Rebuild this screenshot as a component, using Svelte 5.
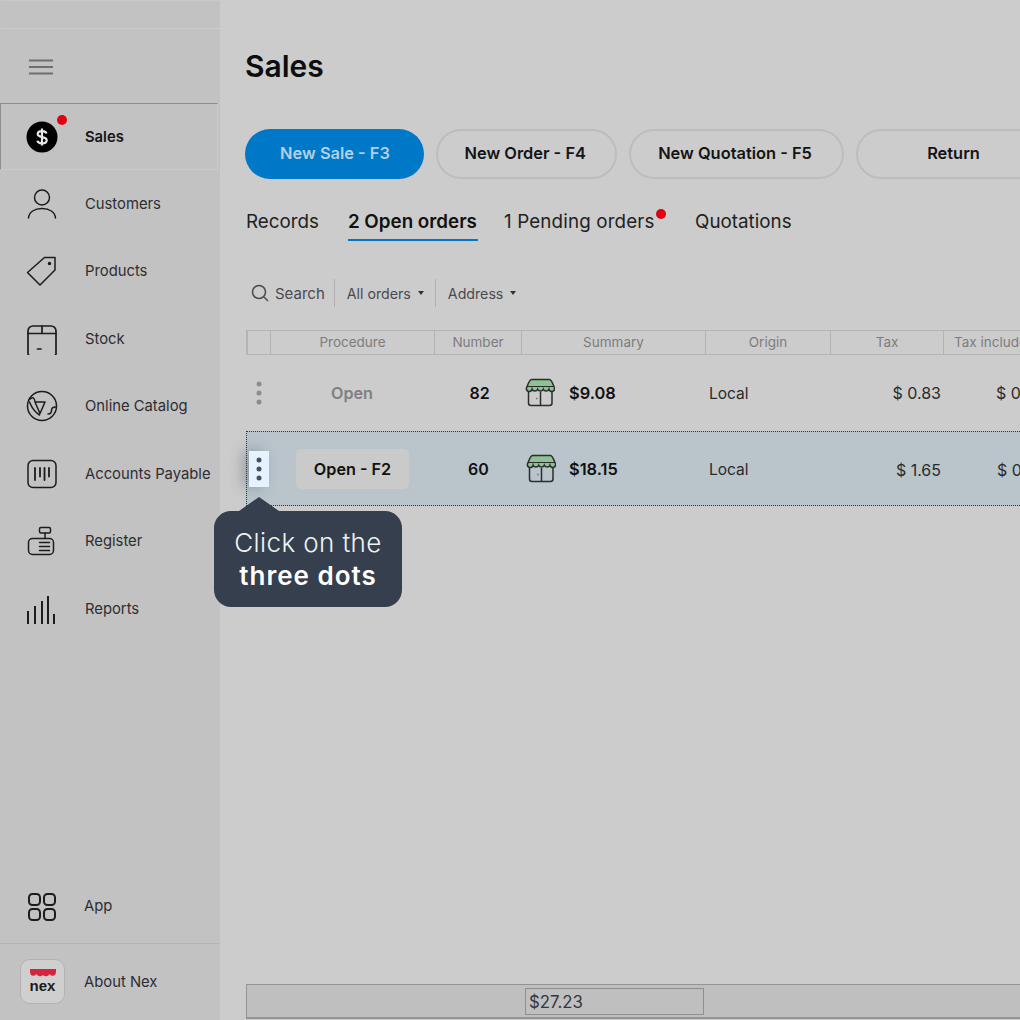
<script>
  const navItems = [
    { label: "Customers", icon: "customers" },
    { label: "Products", icon: "products" },
    { label: "Stock", icon: "stock" },
    { label: "Online Catalog", icon: "catalog" },
    { label: "Accounts Payable", icon: "payable" },
    { label: "Register", icon: "register" },
    { label: "Reports", icon: "reports" },
  ];

  const actions = [
    { label: "New Sale - F3", width: 179, primary: true },
    { label: "New Order - F4", width: 180.5 },
    { label: "New Quotation - F5", width: 215 },
    { label: "Return", width: 198 },
  ];

  const columns = ["", "Procedure", "Number", "Summary", "Origin", "Tax", "Tax included"];

  const orders = [
    { procedure: "Open", number: 82, total: "$9.08", origin: "Local", tax: "$ 0.83", taxIncluded: "$ 0.83" },
    { procedure: "Open - F2", number: 60, total: "$18.15", origin: "Local", tax: "$ 1.65", taxIncluded: "$ 0.83", selected: true },
  ];
</script>

{#snippet dots()}
  <svg width="8" height="24" viewBox="0 0 8 24" fill="currentColor">
    <circle cx="4" cy="3" r="2.5" />
    <circle cx="4" cy="12" r="2.5" />
    <circle cx="4" cy="21" r="2.5" />
  </svg>
{/snippet}

{#snippet shop()}
  <svg width="30" height="30" viewBox="0 0 30 30" fill="none" stroke="#2c2c2c" stroke-width="1.5">
    <rect x="3.5" y="9" width="23.500" height="18.500" rx="2.500" />
    <path d="M15.500 14v13.500" />
    <path d="M11.500 20.500h.8" />
    <path d="M6.500 1.500h18c2 0 3.500 4.500 5 8.500a2.800 2.800 0 0 1-5.600 1.200 3 3 0 0 1-5.600 0 3 3 0 0 1-5.600 0 3 3 0 0 1-5.600 0A2.800 2.800 0 0 1 1.500 10c1.500-4 3-8.500 5-8.500z" fill="#8fc196" />
    <path d="M2 8.500h27" stroke-width="1" />
  </svg>
{/snippet}

{#snippet navIcon(name)}
  <svg width="32" height="32" viewBox="0 0 32 32" fill="none" stroke="#1c1c1c" stroke-width="1.500" stroke-linecap="round" stroke-linejoin="round">
    {#if name === "customers"}
      <circle cx="16" cy="9.500" r="7.500" />
      <path d="M2.500 30c.5-6 6-9.500 13.500-9.500S29 24 29.500 30" />
    {:else if name === "products"}
      <path d="M18.500 2.500h10.500v12.500L14 30 1.500 17.500z" />
      <circle cx="23.500" cy="8.500" r="1" fill="#1c1c1c" />
    {:else if name === "stock"}
      <path d="M2 31V8a5 5 0 0 1 5-5h18a5 5 0 0 1 5 5v23M2 31a3 3 0 0 0 3 2h22a3 3 0 0 0 3-2" stroke-width="1.700" />
      <path d="M2 10.500h28M16 3v7.500M11.500 26h3.500" stroke-width="1.700" />
    {:else if name === "catalog"}
      <circle cx="16" cy="16" r="14.500" />
      <path d="M9 12h10l-5 11.500zM3.500 9.500c3-3 5-2 5.500 2.500M3.500 12c2 5 5 10 10 13M29.500 17c-3 0-4 1-4 3.500s-1.500 3.500-3.500 3.500" />
    {:else if name === "payable"}
      <rect x="2" y="2.500" width="28" height="27" rx="5" />
      <path d="M9 10v12M14 10v8.500M18.500 10v12M23 10v8.500" stroke-width="1.800" />
    {:else if name === "register"}
      <rect x="2.500" y="13.500" width="25" height="16" rx="4" />
      <rect x="13.500" y="2.500" width="11" height="5.500" rx="1.500" />
      <path d="M19 8v5.500M13.500 17.500h10M13.500 21.500h10M13.500 25.500h10" />
    {:else if name === "reports"}
      <path d="M2 31V18M9 31V13M16 31V8M22 31V3M28 31V21" stroke-width="2" stroke-linecap="butt" />
    {:else if name === "app"}
      <rect x="3" y="3" width="11" height="11" rx="3.500" stroke-width="2" />
      <rect x="18" y="3" width="11" height="11" rx="3.500" stroke-width="2" />
      <rect x="3" y="18" width="11" height="11" rx="3.500" stroke-width="2" />
      <rect x="18" y="18" width="11" height="11" rx="3.500" stroke-width="2" />
    {/if}
  </svg>
{/snippet}

<div class="page">
  <aside class="sidebar">
    <div class="strip"></div>
    <div class="menu-row">
      <svg width="26" height="18" viewBox="0 0 26 18" stroke="#6e6e6e" stroke-width="2">
        <path d="M1 2.500h24M1 9h24M1 15.500h24" />
      </svg>
    </div>

    <nav>
      <div class="nav-item active">
        <span class="nav-icon">
          <svg width="32" height="32" viewBox="0 0 32 32">
            <circle cx="16" cy="16" r="15.500" fill="#000" />
            <path d="M20.500 12.500c-.5-1.600-2.200-2.400-4.500-2.400-2.600 0-4.300 1.200-4.300 3 0 4.200 9 2 9 6.100 0 1.900-1.900 3.100-4.700 3.100-2.500 0-4.200-.9-4.700-2.600M16 7.500v17" fill="none" stroke="#e8e8e8" stroke-width="2.200" />
          </svg>
          <span class="badge"></span>
        </span>
        <strong>Sales</strong>
      </div>
      {#each navItems as item}
        <div class="nav-item">
          <span class="nav-icon">{@render navIcon(item.icon)}</span>
          <span>{item.label}</span>
        </div>
      {/each}
    </nav>

    <div class="sidebar-foot">
      <div class="nav-item app-item">
        <span class="nav-icon">{@render navIcon("app")}</span>
        <span class="app-label">App</span>
      </div>
      <div class="about">
        <span class="logo">
          <svg width="28" height="9" viewBox="0 0 28 9">
            <path d="M1 0h26v3.500a3.500 3.500 0 0 1-6.500 1.500 4 4 0 0 1-6.500 1 4 4 0 0 1-6.500-1A3.500 3.500 0 0 1 1 3.500z" fill="#d5253d" />
          </svg>
          <b>nex</b>
        </span>
        <span class="about-label">About Nex</span>
      </div>
    </div>
  </aside>

  <main>
    <h1>Sales</h1>

    <div class="actions">
      {#each actions as action}
        <button type="button" class="action" class:primary={action.primary} style="width: {action.width}px">{action.label}</button>
      {/each}
    </div>

    <div class="tabs">
      <span>Records</span>
      <span class="current">2 Open orders</span>
      <span class="pending">1 Pending orders<i></i></span>
      <span>Quotations</span>
    </div>

    <div class="filters">
      <span class="filter search">
        <svg width="18" height="18" viewBox="0 0 18 18" fill="none" stroke="#4a4a4a" stroke-width="1.500">
          <circle cx="8" cy="8" r="6.500" />
          <path d="M13 13l4 4" />
        </svg>
        Search
      </span>
      <span class="filter">All orders <em></em></span>
      <span class="filter">Address <em></em></span>
    </div>

    <div class="table">
      <div class="head">
        {#each columns as column}
          <span>{column}</span>
        {/each}
      </div>
      {#each orders as order}
        <div class="row" class:selected={order.selected}>
          <span class="more">{@render dots()}</span>
          <span class="procedure"><span class="open">{order.procedure}</span></span>
          <span class="number">{order.number}</span>
          <span class="summary">{@render shop()}<b>{order.total}</b></span>
          <span class="origin">{order.origin}</span>
          <span class="money">{order.tax}</span>
          <span class="money">{order.taxIncluded}</span>
        </div>
      {/each}

      <div class="tooltip">
        <span>Click on the</span>
        <strong>three dots</strong>
      </div>
    </div>

    <div class="totals">
      <span class="total-cell">$27.23</span>
    </div>
  </main>
</div>

<style>
  :global(body) {
    margin: 0;
    background: #cccccc;
  }
  .page {
    display: flex;
    width: 1020px;
    height: 1020px;
    overflow: hidden;
    font-family: Inter, "Liberation Sans", sans-serif;
    color: #111;
  }
  .sidebar {
    display: flex;
    flex-direction: column;
    flex-shrink: 0;
    width: 220px;
    background: #c2c2c2;
  }
  .strip {
    flex-shrink: 0;
    height: 27px;
    margin-left: 1px;
    border-top: 1px solid #c9c9c9;
    border-bottom: 1px solid #cdcdcd;
  }
  .menu-row {
    display: flex;
    align-items: center;
    box-sizing: border-box;
    height: 73px;
    padding: 3px 0 0 28px;
  }
  nav {
    display: flex;
    flex-direction: column;
  }
  .nav-item {
    display: flex;
    align-items: center;
    height: 67.5px;
    font-size: 14.8px;
    color: #2d2d33;
  }
  .nav-item strong {
    font-weight: 600;
    color: #15151a;
  }
  .nav-item.active {
    box-sizing: border-box;
    width: 218px;
    height: 67px;
    border-top: 1px solid #8f8f8f;
    border-left: 1px solid #8f8f8f;
    border-right: 1px solid #cacaca;
    border-bottom: 1px solid #cacaca;
    margin-top: 1px;
  }
  .nav-icon {
    position: relative;
    display: flex;
    justify-content: center;
    width: 32px;
    margin: 0 27px 0 26px;
  }
  .active .nav-icon {
    margin-left: 25px;
  }
  .badge {
    position: absolute;
    top: -6px;
    right: -9px;
    width: 10px;
    height: 10px;
    border-radius: 50%;
    background: #e0000f;
  }
  .sidebar-foot {
    margin-top: auto;
  }
  .app-item {
    height: 72px;
  }
  .app-item .nav-icon {
    margin-right: 26px;
  }
  .app-label {
    padding-bottom: 2px;
  }
  .about {
    display: flex;
    align-items: center;
    gap: 19px;
    width: 219px;
    height: 77px;
    box-sizing: border-box;
    padding: 0 0 2px 20px;
    border-top: 1px solid #b4b4b4;
    font-size: 14.8px;
    color: #2d2d33;
  }
  .about-label {
    padding-top: 1px;
  }
  .logo {
    display: flex;
    flex-direction: column;
    align-items: center;
    justify-content: center;
    box-sizing: border-box;
    width: 45px;
    height: 45px;
    border: 1px solid #b2b2b2;
    border-radius: 10px;
    background: #cfcfcf;
  }
  .logo b {
    margin-top: 1px;
    font-family: "Liberation Sans", sans-serif;
    font-size: 15px;
    line-height: 14px;
    color: #1b1b1b;
  }
  main {
    flex: 1;
    min-width: 0;
    padding-left: 25px;
  }
  h1 {
    margin: 48px 0 0;
    font-size: 30px;
    line-height: 36px;
    font-weight: 600;
    color: #0d0d0d;
  }
  .actions {
    display: flex;
    gap: 12px;
    margin-top: 45px;
  }
  .action {
    flex-shrink: 0;
    height: 50px;
    padding: 0 2px 2px 0;
    font: 600 16.4px Inter, sans-serif;
    color: #141414;
    background: transparent;
    border: 2px solid #bdbdbd;
    border-radius: 25px;
  }
  .action.primary {
    padding: 0 0 2px 1px;
    border: none;
    background: #0078c8;
    color: #b4cfe2;
  }
  .tabs {
    display: flex;
    gap: 28px;
    margin-top: 31px;
    padding-left: 1px;
    font-size: 18.8px;
    line-height: 24px;
    color: #222;
  }
  .tabs span {
    position: relative;
    flex-shrink: 0;
  }
  .current {
    margin: 0 -1px 0 1px;
    font-weight: 600;
    color: #111;
  }
  .current::after {
    content: "";
    position: absolute;
    left: 0;
    right: -1px;
    bottom: -7px;
    height: 2px;
    background: #0078c8;
  }
  .pending {
    margin-right: 12.5px;
    letter-spacing: 0.15px;
  }
  .pending i {
    position: absolute;
    top: -1px;
    right: -11px;
    width: 10px;
    height: 10px;
    border-radius: 50%;
    background: #e0000f;
  }
  .filters {
    display: flex;
    align-items: center;
    height: 28px;
    margin-top: 45px;
    padding-left: 6px;
    font-size: 14.2px;
    color: #4a4a4f;
  }
  .filter {
    display: flex;
    align-items: center;
    height: 100%;
    padding: 0 11px 0 12px;
    border-left: 1px solid #b0b0b0;
  }
  .search {
    gap: 6px;
    padding: 0 9px 0 0;
    border-left: none;
    font-size: 15px;
  }
  .filter em {
    width: 0;
    height: 0;
    margin-left: 7px;
    border: 3.5px solid transparent;
    border-top: 4px solid #333;
    border-bottom: none;
  }
  .table {
    position: relative;
    width: 900px;
    margin-top: 23px;
    margin-left: 1px;
  }
  .head, .row {
    display: grid;
    grid-template-columns: 24px 164px 87px 184px 125px 113px 1fr;
  }
  .head {
    grid-template-columns: 22px 164px 87px 184px 125px 113px 1fr;
    box-sizing: border-box;
    height: 25px;
    border: 1px solid #b4b4b4;
    border-left-width: 2px;
    border-right: none;
    font-size: 13.5px;
    line-height: 23px;
    color: #7d7d7d;
  }
  .head span {
    text-align: center;
    border-left: 1px solid #b4b4b4;
    overflow: hidden;
    white-space: nowrap;
  }
  .head span:first-child {
    border-left: none;
  }
  .head span:last-child {
    text-align: left;
    padding-left: 10px;
  }
  .row {
    align-items: center;
    height: 76px;
    font-size: 15.5px;
  }
  .row.selected {
    box-sizing: border-box;
    height: 75px;
    background: #b9c4cb;
    border: 1px dotted #333;
    border-right: none;
  }
  .more {
    display: flex;
    justify-content: center;
    margin-left: 1px;
    color: #8d8d8d;
  }
  .selected .more {
    box-sizing: border-box;
    justify-content: center;
    align-items: center;
    width: 20px;
    height: 36px;
    margin-left: 2px;
    background: #e6f3ff;
    color: #48505a;
    box-shadow: -6px 0 14px rgba(60, 70, 80, 0.35);
  }
  .procedure {
    display: flex;
    justify-content: center;
  }
  .open {
    font-size: 16.2px;
    font-weight: 600;
    color: #808080;
  }
  .selected .open {
    box-sizing: border-box;
    width: 113px;
    height: 40px;
    line-height: 40px;
    margin-left: -1px;
    text-align: center;
    border-radius: 5px;
    background: #cacaca;
    color: #111;
  }
  .number {
    padding-left: 4px;
    text-align: center;
    font-weight: 600;
    font-size: 16px;
  }
  .selected .number {
    padding-left: 0;
  }
  .summary {
    display: flex;
    align-items: center;
    gap: 14px;
    padding-left: 4px;
  }
  .selected .summary {
    gap: 13px;
  }
  .summary b {
    font-weight: 600;
    font-size: 16.4px;
  }
  .origin {
    padding-left: 4px;
    color: #2a2a2a;
  }
  .selected .origin {
    padding: 2px 0 0 3px;
  }
  .money {
    text-align: right;
    font-size: 16px;
    color: #2a2a2a;
    padding-right: 2px;
  }
  .selected .money {
    padding-top: 2px;
    padding-right: 3px;
  }
  .money:last-child {
    text-align: left;
    padding-left: 53px;
  }
  .tooltip {
    position: absolute;
    top: 181px;
    left: -32px;
    box-sizing: border-box;
    width: 188px;
    height: 96px;
    padding-top: 15px;
    display: flex;
    flex-direction: column;
    align-items: center;
    border-radius: 17px;
    background: #353f4e;
    color: #f0f3f6;
    font-size: 26px;
    line-height: 33px;
    letter-spacing: 0.4px;
    font-weight: 300;
  }
  .tooltip strong {
    font-weight: 600;
    letter-spacing: 1px;
    color: #fff;
  }
  .tooltip::before {
    content: "";
    position: absolute;
    top: -14px;
    left: 25px;
    border: 20px solid transparent;
    border-top: none;
    border-bottom: 14px solid #353f4e;
  }
  .totals {
    box-sizing: border-box;
    display: flex;
    align-items: center;
    width: 800px;
    height: 35px;
    margin-top: 478px;
    margin-left: 1px;
    padding-left: 278px;
    background: #bfbfbf;
    border: 1px solid #949494;
    border-bottom-width: 2px;
    border-right: none;
    font-size: 16.8px;
    color: #333742;
  }
  .total-cell {
    box-sizing: border-box;
    width: 179px;
    height: 27px;
    line-height: 27px;
    padding-left: 3px;
    border: 1px solid #8f8f8f;
  }
</style>
